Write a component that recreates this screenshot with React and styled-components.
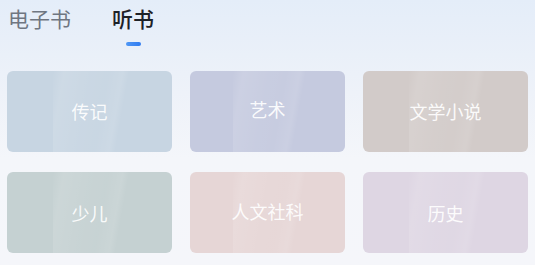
import React, { useState } from 'react'
import styled, { createGlobalStyle } from 'styled-components'

const GlobalStyle = createGlobalStyle`
    html, body {
        margin: 0;
        padding: 0;
    }
    body {
        font-family: "Noto Sans CJK SC", "Noto Sans", sans-serif;
        background: #f4f6fa;
    }
`

const Page = styled.div`
    width: 535px;
    height: 265px;
    overflow: hidden;
    background: linear-gradient(180deg, #e4edf9 0%, #eef2f9 35%, #f4f6fa 60%, #f5f6fa 100%);
`

const Tabs = styled.div`
    display: flex;
    gap: 41px;
    padding: 3px 0 0 8px;
    height: 67px;
    box-sizing: border-box;
`

const Tab = styled.div`
    position: relative;
    font-size: 21px;
    line-height: 30px;
    font-weight: ${p => (p.$active ? 500 : 400)};
    color: ${p => (p.$active ? '#1d2127' : '#6f7681')};
    cursor: pointer;

    &::after {
        content: '';
        display: ${p => (p.$active ? 'block' : 'none')};
        position: absolute;
        left: 50%;
        top: 39px;
        width: 15px;
        height: 4px;
        margin-left: -7px;
        border-radius: 2px;
        background: linear-gradient(90deg, #4f97f5, #2f7bf0);
    }
`

const Grid = styled.div`
    display: grid;
    grid-template-columns: 165px 155px 165px;
    grid-auto-rows: 81px;
    column-gap: 18px;
    row-gap: 20px;
    padding: 4px 0 0 7px;
`

const Card = styled.div`
    position: relative;
    overflow: hidden;
    border-radius: 6px;
    background: ${p => p.$bg};
    display: flex;
    align-items: center;
    justify-content: center;

    &::before {
        content: '';
        position: absolute;
        top: 0;
        bottom: 0;
        left: 28%;
        width: 48%;
        background: linear-gradient(100deg,
            rgba(255, 255, 255, 0) 0%,
            rgba(255, 255, 255, 0.12) 12%,
            rgba(255, 255, 255, 0.06) 40%,
            rgba(255, 255, 255, 0.04) 60%,
            rgba(255, 255, 255, 0.1) 75%,
            rgba(255, 255, 255, 0) 82%);
    }
`

const Label = styled.span`
    position: relative;
    font-size: 18px;
    line-height: 24px;
    color: rgba(255, 255, 255, 0.92);
    margin-top: ${p => p.$dy || 0}px;
`

const categories = [
    { name: '传记', bg: '#c7d5e2', dy: -1 },
    { name: '艺术', bg: '#c5cadf', dy: -5 },
    { name: '文学小说', bg: '#d2cbc9', dy: -1 },
    { name: '少儿', bg: '#c5d1d2', dy: 0 },
    { name: '人文社科', bg: '#e6d6d6', dy: -4 },
    { name: '历史', bg: '#ded6e3', dy: 0 },
]

export default function App() {
    const [tab, setTab] = useState(1)
    return (
        <Page>
            <GlobalStyle />
            <Tabs>
                {['电子书', '听书'].map((t, i) => (
                    <Tab key={t} $active={tab === i} onClick={() => setTab(i)}>
                        {t}
                    </Tab>
                ))}
            </Tabs>
            <Grid>
                {categories.map(c => (
                    <Card key={c.name} $bg={c.bg}>
                        <Label $dy={c.dy}>{c.name}</Label>
                    </Card>
                ))}
            </Grid>
        </Page>
    )
}
